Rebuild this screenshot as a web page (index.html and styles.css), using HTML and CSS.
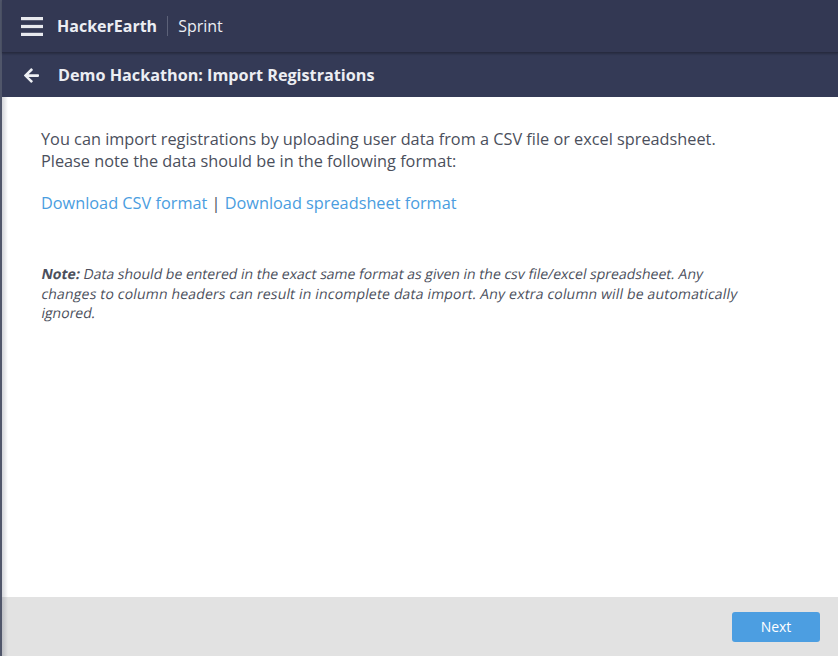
FILE: index.html
```html
<!DOCTYPE html>
<html>
<head>
<meta charset="utf-8">
<link rel="stylesheet" href="styles.css">
</head>
<body>
<div class="app">
  <header class="topbar">
    <svg class="menu-icon" width="22" height="19" viewBox="0 0 22 19"><rect x="0" y="0" width="22" height="3.2" fill="#e8e9ee"/><rect x="0" y="7.9" width="22" height="3.2" fill="#e8e9ee"/><rect x="0" y="15.8" width="22" height="3.2" fill="#e8e9ee"/></svg>
    <span class="brand">HackerEarth</span>
    <span class="divider"></span>
    <span class="product">Sprint</span>
  </header>
  <div class="subbar">
    <svg class="back-icon" width="15" height="15" viewBox="0 0 448 448"><path fill="#eef0f4" d="M257 414l-22 22c-10 10-25 10-34 0L7 242c-10-10-10-25 0-34L201 14c10-10 25-10 34 0l22 22c10 10 10 25 0 35L137 186h287c13 0 24 11 24 24v32c0 13-11 24-24 24H137l120 114c10 10 10 25 0 34z"/></svg>
    <h1 class="title">Demo Hackathon: Import Registrations</h1>
  </div>
  <main class="content">
    <p class="intro">You can import registrations by uploading user data from a CSV file or excel spreadsheet.<br>Please note the data should be in the following format:</p>
    <p class="links"><a href="#">Download CSV format</a> <span class="sep">|</span> <a href="#">Download spreadsheet format</a></p>
    <p class="note">
      <span class="note-line"><b>Note:</b> Data should be entered in the exact same format as given in the csv file/excel spreadsheet. Any</span>
      <span class="note-line line-wide">changes to column headers can result in incomplete data import. Any extra column will be automatically</span>
      <span class="note-line">ignored.</span>
    </p>
  </main>
  <footer class="footer">
    <button class="next">Next</button>
  </footer>
</div>
</body>
</html>
```
FILE: styles.css
```css
html, body {
  margin: 0;
  padding: 0;
  height: 100%;
}
body {
  font-family: "Open Sans", "Noto Sans", sans-serif;
  background: #ffffff;
}
.app {
  display: flex;
  flex-direction: column;
  height: 656px;
  border-left: 2px solid #50566a;
  box-sizing: border-box;
  position: relative;
}
.app::before {
  content: "";
  position: absolute;
  left: 0;
  top: 97px;
  bottom: 0;
  width: 6px;
  background: linear-gradient(to right, rgba(80,86,106,0.25), rgba(80,86,106,0));
  pointer-events: none;
}
.topbar {
  height: 52px;
  background: #333853;
  display: flex;
  align-items: center;
  padding-left: 19px;
  border-bottom: 1px solid #272b40;
  box-shadow: 0 1px 2px rgba(0,0,0,0.25);
  position: relative;
  z-index: 1;
}
.menu-icon {
  display: block;
  margin-top: 1px;
}
.brand {
  color: #eceef3;
  font-weight: 700;
  font-size: 16px;
  margin-left: 14px;
}
.divider {
  width: 1px;
  height: 20px;
  background: #5c6178;
  margin: 0 10px 0 10px;
}
.product {
  color: #eceef3;
  font-size: 16px;
}
.subbar {
  height: 44px;
  background: #343a56;
  display: flex;
  align-items: center;
  padding-left: 22px;
}
.back-icon {
  display: block;
}
.title {
  margin: 0 0 0 19px;
  color: #eceef3;
  font-size: 16.2px;
  font-weight: 700;
}
.content {
  flex: 1;
  padding: 31px 39px 0;
}
.intro {
  margin: 0;
  color: #4b4f5c;
  font-size: 16.3px;
  line-height: 22px;
}
.links {
  margin: 20px 0 0;
  color: #4b4f5c;
  font-size: 16.3px;
  line-height: 22px;
}
.links a {
  color: #4a9de0;
  text-decoration: none;
}
.sep {
  color: #4b4f5c;
}
.note {
  margin: 50px 0 0;
  color: #4b4f5c;
  font-size: 14px;
  line-height: 19.5px;
}
.note-line {
  display: block;
  white-space: nowrap;
  transform: skewX(-11deg);
  transform-origin: 0 70%;
}
.line-wide {
  letter-spacing: 0.17px;
}
.note b {
  font-weight: 700;
}
.footer {
  height: 59px;
  background: #e2e2e2;
  display: flex;
  align-items: center;
  justify-content: flex-end;
  padding-right: 18px;
}
.next {
  width: 88px;
  height: 30px;
  background: #4c9ee1;
  color: #ffffff;
  border: none;
  border-radius: 3px;
  font-family: "Open Sans", "Noto Sans", sans-serif;
  font-size: 14px;
  cursor: pointer;
}
```
